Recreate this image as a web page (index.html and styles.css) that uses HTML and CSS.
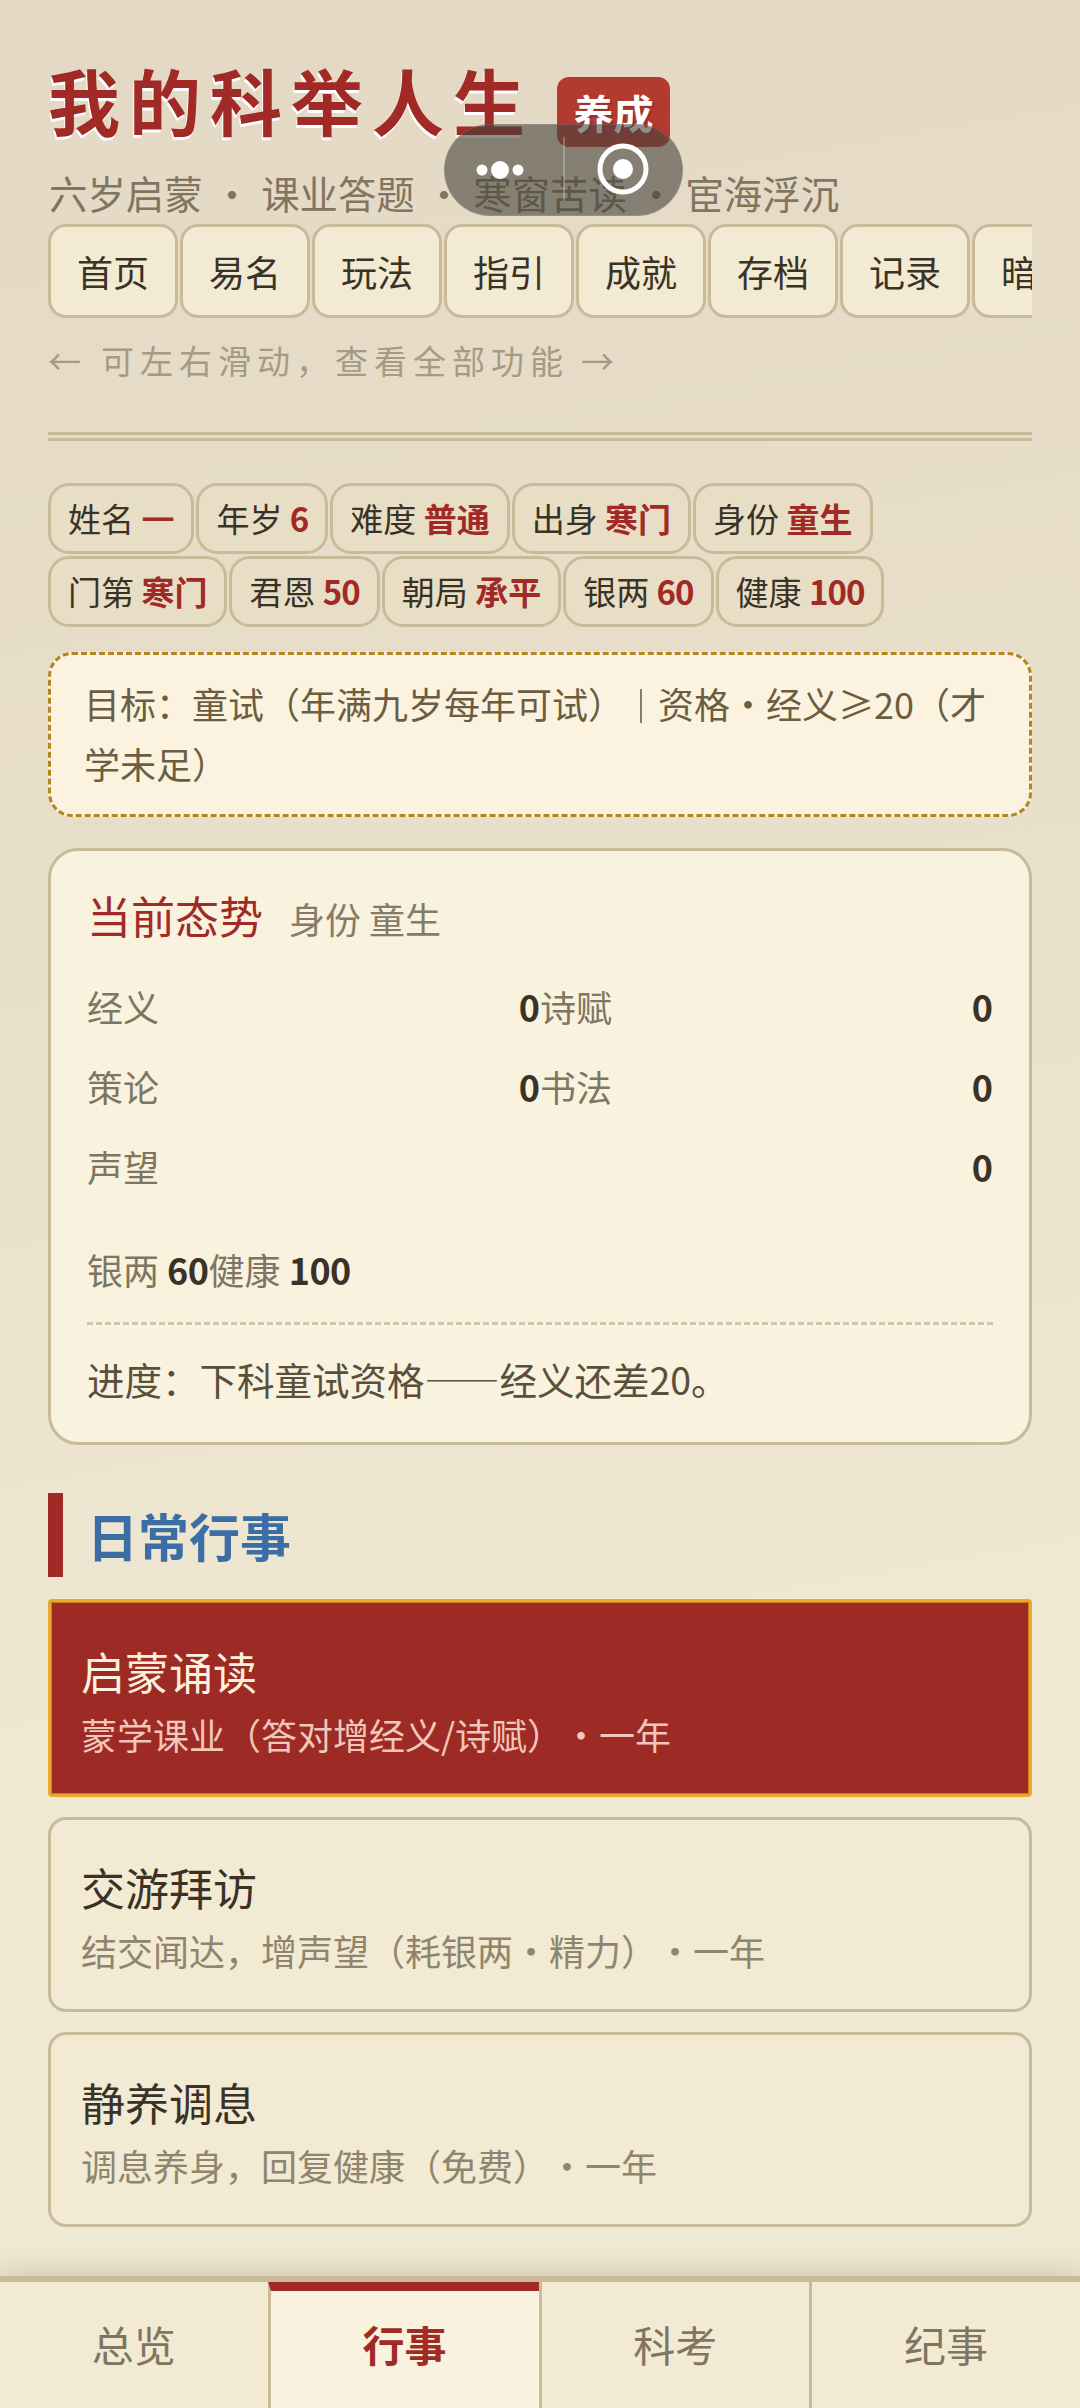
FILE: index.html
```html
<!DOCTYPE html>
<html lang="zh-CN">
<head>
<meta charset="UTF-8">
<title>我的科举人生</title>
<link rel="stylesheet" href="styles.css">
</head>
<body>
	<div class="page">
		<header class="head">
			<h1 class="title"><span class="title-text">我的科举人生</span><span class="badge">养成</span></h1>
			<p class="subtitle">六岁启蒙 • 课业答题 • 寒窗苦读 • 宦海浮沉</p>
			<div class="menu">
				<a class="menu-btn">首页</a>
				<a class="menu-btn">易名</a>
				<a class="menu-btn">玩法</a>
				<a class="menu-btn">指引</a>
				<a class="menu-btn">成就</a>
				<a class="menu-btn">存档</a>
				<a class="menu-btn">记录</a>
				<a class="menu-btn">暗色</a>
			</div>
			<p class="hint"><span class="hint-arrow">←</span>可左右滑动，查看全部功能<span class="hint-arrow hint-next">→</span></p>
		</header>

		<div class="tags">
			<span class="tag">姓名 <b class="thin">一</b></span>
			<span class="tag">年岁 <b class="num">6</b></span>
			<span class="tag">难度 <b>普通</b></span>
			<span class="tag">出身 <b>寒门</b></span>
			<span class="tag">身份 <b>童生</b></span>
			<span class="tag">门第 <b>寒门</b></span>
			<span class="tag">君恩 <b class="num">50</b></span>
			<span class="tag">朝局 <b>承平</b></span>
			<span class="tag">银两 <b class="num">60</b></span>
			<span class="tag">健康 <b class="num">100</b></span>
		</div>

		<div class="goal">目标：童试（年满九岁每年可试）<span class="goal-sep"></span>资格・经义≥20（才学未足）</div>

		<section class="card">
			<div class="card-head"><span class="card-title">当前态势</span><span class="card-sub">身份 童生</span></div>
			<div class="stats">
				<div class="stat"><span>经义</span><b>0</b></div>
				<div class="stat"><span>诗赋</span><b>0</b></div>
				<div class="stat"><span>策论</span><b>0</b></div>
				<div class="stat"><span>书法</span><b>0</b></div>
				<div class="stat stat-wide"><span>声望</span><b>0</b></div>
			</div>
			<div class="money"><span>银两 <b>60</b></span><span>健康 <b>100</b></span></div>
			<p class="progress">进度：下科童试资格——经义还差20。</p>
		</section>

		<h2 class="section-title">日常行事</h2>

		<div class="actions">
			<a class="action on">
				<div class="action-name">启蒙诵读</div>
				<div class="action-desc">蒙学课业（答对增经义/诗赋）・一年</div>
			</a>
			<a class="action">
				<div class="action-name">交游拜访</div>
				<div class="action-desc">结交闻达，增声望（耗银两・精力）・一年</div>
			</a>
			<a class="action">
				<div class="action-name">静养调息</div>
				<div class="action-desc">调息养身，回复健康（免费）・一年</div>
			</a>
		</div>

		<nav class="tabs">
			<a class="tab">总览</a>
			<a class="tab on">行事</a>
			<a class="tab">科考</a>
			<a class="tab">纪事</a>
		</nav>
	</div>

	<div class="capsule">
		<div class="capsule-part">
			<svg width="56" height="20" viewBox="0 0 56 20"><circle cx="8" cy="10" r="5.5" fill="#fff"/><circle cx="26" cy="10" r="9" fill="#fff"/><circle cx="44" cy="10" r="5.5" fill="#fff"/></svg>
		</div>
		<div class="capsule-part capsule-right">
			<svg width="52" height="52" viewBox="0 0 52 52"><circle cx="26" cy="26" r="23" fill="none" stroke="#fff" stroke-width="5"/><circle cx="26" cy="26" r="10" fill="#fff"/></svg>
		</div>
	</div>
</body>
</html>
```

FILE: styles.css
```css
*{margin: 0; padding: 0; box-sizing: border-box;}
a{text-decoration: none; display: block; color: inherit;}
html,body{width: 1080px; height: 2408px; overflow: hidden;}
body{
	font-family: "Noto Sans CJK SC", "Noto Sans", sans-serif;
	color: #3a3226;
	background: linear-gradient(170deg, #e3d8c3 0%, #e8dfca 35%, #efe8d3 70%, #efe8d3 100%);
	position: relative;
	text-spacing-trim: space-all;
}
.page{height: 2408px; display: flex; flex-direction: column; padding-top: 54px;}

/* head */
.head{padding: 0 48px;}
.title{display: flex; align-items: flex-start; height: 102px; font-size: 72px; line-height: 90px; font-weight: 700;}
.title-text{color: #a12a26; letter-spacing: 9px; text-shadow: -1px 3px 0 #fff;}
.badge{
	margin: 23px 0 0 23px;
	width: 113px; height: 70px;
	border-radius: 12px;
	background: #b23a2e;
	color: #fff;
	font-size: 40px; line-height: 70px; text-align: center;
	text-shadow: 2px 2px 0 rgba(0,0,0,.15);
}
.subtitle{margin: 8px 0 4px 1px; font-size: 38.4px; line-height: 56px; color: #7f7560; white-space: nowrap; word-spacing: 1.5px;}
.menu{display: flex; gap: 2px; overflow: hidden;}
.menu-btn{
	flex: none;
	width: 130px; height: 94px;
	border: 3px solid #c9bb9a;
	border-radius: 18px;
	background: #f2ead2;
	font-size: 36px; line-height: 88px; text-align: center;
	color: #3a3226;
}
.hint{margin-top: 18px; font-size: 33px; line-height: 48px; color: #a69a82; letter-spacing: 6px; display: flex; gap: 20px;}
.hint-arrow{letter-spacing: 0;}
.hint-next{margin-left: -8px;}

/* tags */
.tags{
	margin: 48px 48px 0;
	padding-top: 42px;
	display: flex; flex-wrap: wrap; gap: 2px;
	border-top: 9px double #c9bb9a;
}
.tag{
	height: 71px;
	padding: 0 17px;
	border: 3px solid #c9bb9a;
	border-radius: 21px;
	background: #e8dec5;
	font-size: 33px; line-height: 64px; white-space: nowrap;
}
.tag b{color: #a12a26; font-weight: 700;}
.tag b.thin{font-weight: 500;}
.tag b.num{letter-spacing: -1px;}

/* goal */
.goal{
	margin: 25px 48px 0;
	height: 165px;
	padding: 18px 33px;
	border: 3px dashed #b08820;
	border-radius: 24px;
	background: #fbf3e0;
	font-size: 36px; line-height: 60px;
	color: #6b5d3f;
}
.goal-sep{display: inline-block; width: 2px; height: 34px; margin: 0 16px 0 16px; background: #8a7c5e; vertical-align: -4px;}

/* card */
.card{
	margin: 31px 48px 0;
	height: 597px;
	padding: 32px 36px 0;
	border: 3px solid #c9bb9a;
	border-radius: 30px;
	background: #f8f2df;
}
.card-head{display: flex; align-items: baseline; gap: 26px; height: 64px; line-height: 64px;}
.card-title{font-size: 44px; color: #a12a26;}
.card-sub{font-size: 36px; color: #857b66;}
.stats{display: grid; grid-template-columns: 1fr 1fr; margin-top: 19px;}
.stat{display: flex; justify-content: space-between; height: 80px; font-size: 36px; line-height: 80px; color: #7f7560;}
.stat-wide{grid-column: 1 / -1;}
.stat b{font-weight: 600; color: #3a3226;}
.money{display: flex; margin-top: 31px; font-size: 36px; line-height: 64px; color: #7f7560;}
.money b{font-weight: 600; color: #3a3226; letter-spacing: -.5px;}
.progress{margin-top: 21px; padding-top: 26px; border-top: 3px dashed #cfc4a8; font-size: 37.5px; line-height: 56px; color: #5a4f3a;}

/* section */
.section-title{
	margin: 48px 48px 0;
	height: 84px;
	padding-left: 24px;
	border-left: 15px solid #a12a26;
	font-size: 51px; line-height: 84px; font-weight: 700;
	color: #3b6ea5;
}

/* actions */
.actions{display: flex; flex-direction: column; gap: 20px; margin: 22px 48px 0;}
.action{
	height: 195px;
	padding: 34px 30px 0;
	border: 3px solid #c9bb9a;
	border-radius: 18px;
	background: #f2ead2;
}
.action-name{font-size: 44px; line-height: 66px; color: #3a3226;}
.action-desc{margin-top: 4px; font-size: 36px; line-height: 52px; color: #8f856f;}
.action.on{
	padding-top: 36px;
	background: #9e2a25;
	border-color: #e8a92e;
	border-radius: 4px;
	box-shadow: inset 0 0 0 1px #c77f18;
	height: 198px;
}
.action.on .action-name{color: #fbf1dc;}
.action.on .action-desc{color: #f1c7ba;}

/* bottom tabs */
.tabs{
	margin-top: auto;
	display: flex;
	height: 132px;
	border-top: 6px solid #c9bb9a;
	background: #f2ead2;
	box-shadow: 0 -6px 24px rgba(90,70,40,.18);
}
.tab{flex: 1; font-size: 42px; line-height: 124px; text-align: center; color: #7f7560; border-left: 3px solid #c9bb9a;}
.tab:first-child{border-left: 0;}
.tab.on{background: #f8f2df; color: #a12a26; font-weight: 700; border-top: 9px solid #a12a26; line-height: 106px;}

/* wechat capsule */
.capsule{
	position: absolute; left: 444px; top: 124px;
	width: 239px; height: 92px;
	display: flex;
	border-radius: 46px;
	background: rgba(70,66,60,.6);
	border: 1px solid rgba(255,255,255,.12);
}
.capsule-part{flex: 1; display: flex; align-items: center; justify-content: center;}
.capsule-part svg{margin-right: 4px;}
.capsule-right{border-left: 2px solid rgba(255,255,255,.25); margin: 12px 0 14px;}
.capsule-right svg{margin: 0;}
```
